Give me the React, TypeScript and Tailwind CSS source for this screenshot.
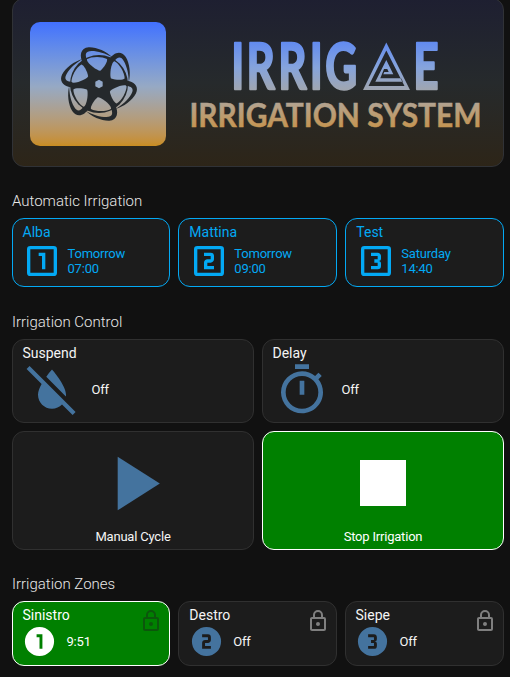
import type { ReactNode } from "react";

const digits: Record<number, string> = {
  1: "M14,17H12V9H10V7H14Z",
  2: "M15,11C15,12.11 14.1,13 13,13H11V15H15V17H9V13C9,11.89 9.9,11 11,11H13V9H9V7H13A2,2 0 0,1 15,9Z",
  3: "M15,15V13.5A1.5,1.5 0 0,0 13.5,12A1.5,1.5 0 0,0 15,10.5V9C15,7.89 14.1,7 13,7H9V9H13V11H11V13H13V15H9V17H13A2,2 0 0,0 15,15Z",
};
const boxOutline =
  "M19,19H5V5H19M19,3H5A2,2 0 0,0 3,5V19A2,2 0 0,0 5,21H19A2,2 0 0,0 21,19V5A2,2 0 0,0 19,3Z";
const circle = "M12,2A10,10 0 0,0 2,12A10,10 0 0,0 12,22A10,10 0 0,0 22,12A10,10 0 0,0 12,2Z";
const waterOff =
  "M20.84 22.73L16.29 18.18C15.2 19.3 13.69 20 12 20C8.69 20 6 17.31 6 14C6 12.67 6.67 11.03 7.55 9.44L1.11 3L2.39 1.73L22.11 21.46L20.84 22.73M18 14C18 10 12 3.25 12 3.25S10.84 4.55 9.55 6.35L17.95 14.75C18 14.5 18 14.24 18 14Z";
const timer =
  "M12,20A7,7 0 0,1 5,13A7,7 0 0,1 12,6A7,7 0 0,1 19,13A7,7 0 0,1 12,20M19.03,7.39L20.45,5.97C20,5.46 19.55,5 19.04,4.56L17.62,6C16.07,4.74 14.12,4 12,4A9,9 0 0,0 3,13A9,9 0 0,0 12,22C17,22 21,17.97 21,13C21,10.88 20.26,8.93 19.03,7.39M11,14H13V8H11M15,1H9V3H15V1Z";
const lock =
  "M12,17C10.89,17 10,16.1 10,15A2,2 0 0,1 12,13A2,2 0 0,1 14,15A2,2 0 0,1 12,17M18,20V10H6V20H18M18,8A2,2 0 0,1 20,10V20A2,2 0 0,1 18,22H6C4.89,22 4,21.1 4,20V10C4,8.89 4.89,8 6,8H7V6A5,5 0 0,1 12,1A5,5 0 0,1 17,6V8H18M12,3A3,3 0 0,0 9,6V8H15V6A3,3 0 0,0 12,3Z";

function Icon({ d, className }: { d: string; className: string }) {
  return (
    <svg viewBox="0 0 24 24" className={`shrink-0 ${className}`} fill="currentColor" fillRule="evenodd">
      <path d={d} />
    </svg>
  );
}

const sectors = [0, 60, 120, 180, 240, 300];

function Rotor() {
  return (
    <svg viewBox="-117 -117 234 234" className="mb-px ml-0.5 h-[78px] w-[78px] text-[#25292c]">
      <mask id="holes">
        <rect x="-117" y="-117" width="234" height="234" fill="white" />
        {sectors.map((a) => (
          <path
            key={a}
            transform={`rotate(${a})`}
            d="M-37,-74C-24,-83 8,-84 24,-75C27,-68 14,-48 4,-40C0,-37 -34,-58 -37,-74Z"
            fill="black"
          />
        ))}
        <path d="M0,-13L11,-6.5V6.5L0,13L-11,6.5V-6.5Z" fill="black" />
      </mask>
      <circle r="87" fill="currentColor" mask="url(#holes)" />
      {sectors.map((a) => (
        <path
          key={a}
          transform={`rotate(${a})`}
          d="M-48,-62C-60,-84 -56,-108 -31,-110C-8,-111 22,-98 40,-80C20,-92 -4,-99 -22,-99C-42,-99 -42,-88 -36,-73Z"
          fill="currentColor"
        />
      ))}
    </svg>
  );
}

function Banner() {
  return (
    <div className="-mt-[2px] flex h-[169px] shrink-0 items-start rounded-xl border border-[#303236] bg-linear-to-b from-[#1e1f31] via-[#262a2c] to-[#2d2518] pl-[17px] pt-[11px]">
      <div className="mt-3 flex h-[124px] w-[136px] shrink-0 items-center justify-center rounded-[10px] bg-linear-to-b from-[#4270ff] via-[#96a9c4] via-52% to-[#c98d20]">
        <Rotor />
      </div>
      <svg width="302" height="140" viewBox="185 10 302 140" className="ml-[19px] shrink-0">
        <defs>
          <linearGradient id="sky" gradientUnits="userSpaceOnUse" x1="0" y1="42" x2="0" y2="128">
            <stop offset="0" stopColor="#628bf0" />
            <stop offset="0.3" stopColor="#86a4dc" />
            <stop offset="0.56" stopColor="#a0a6b0" />
            <stop offset="0.76" stopColor="#b7a185" />
            <stop offset="1" stopColor="#c59450" />
          </linearGradient>
        </defs>
        <g fill="url(#sky)" fontFamily="Lato, sans-serif" fontWeight="700">
          <g stroke="url(#sky)" strokeWidth="2.4" strokeLinejoin="round" fontSize="63" transform="scale(0.7 1)">
            <text y="89.5" x="330.5 352 397.6 442.5 464.5">
              IRRIG
            </text>
            <text y="89.5" x="590.5">
              E
            </text>
          </g>
          <text
            y="127"
            fontSize="33"
            stroke="url(#sky)"
            strokeWidth="0.5"
            textLength="292"
            lengthAdjust="spacingAndGlyphs"
            x="189.5"
          >
            IRRIGATION SYSTEM
          </text>
          <path
            fillRule="evenodd"
            d="M386.3,42.5L410,90H363ZM386.3,50.5L368.5,86H404.5ZM386.3,60L393.3,74.3H383.3L384.3,72H388.7L387.3,69H384L380.3,78.3H401L403,81.7H375.3Z"
          />
        </g>
      </svg>
    </div>
  );
}

function Heading({ children, className }: { children: ReactNode; className: string }) {
  return <h2 className={`text-[15px] font-light leading-5 text-[#e8e8e8] ${className}`}>{children}</h2>;
}

function Schedule({ n, name, day, time }: { n: number; name: string; day: string; time: string }) {
  return (
    <div
      className={`h-[69px] rounded-xl border border-[#03a9f4] bg-[#1c1c1c] pt-1 text-[#03a9f4] ${
        n === 1 ? "pl-[9.5px]" : "pl-[10.3px]"
      }`}
    >
      <div className="text-[14px] leading-[18px]">{name}</div>
      <div className="-ml-[0.5px] flex items-center">
        <Icon d={boxOutline + digits[n]} className="h-10 w-10" />
        <div className="ml-[5.5px] text-[13px] leading-[15px] tracking-[-0.2px]">
          <div>{day}</div>
          <div>{time}</div>
        </div>
      </div>
    </div>
  );
}

function Control({ name, icon }: { name: string; icon: string }) {
  return (
    <div className="h-[84px] rounded-xl border border-[#303030] bg-[#1c1c1c] pl-[9.5px] pt-1 text-[#f4f4f4]">
      <div className="text-[14px] leading-[18px]">{name}</div>
      <div className="ml-[1.5px] flex items-center">
        <Icon d={icon} className="h-14 w-14 text-[#44739e]" />
        <div className="ml-[11.5px] text-[13px] tracking-[-0.2px]">Off</div>
      </div>
    </div>
  );
}

function Action({ name, icon, active }: { name: string; icon: string; active?: boolean }) {
  return (
    <div
      className={`flex h-[119px] flex-col items-center rounded-xl border pt-[5px] ${
        active ? "border-white bg-[#008000] text-white" : "border-[#303030] bg-[#1c1c1c] text-[#f4f4f4]"
      }`}
    >
      <Icon d={icon} className={active ? "h-[92px] w-[92px]" : "h-[92px] w-[92px] text-[#44739e]"} />
      <div className="text-[13px] leading-[15px] tracking-[-0.2px]">{name}</div>
    </div>
  );
}

function Zone({ n, name, state, active }: { n: number; name: string; state: string; active?: boolean }) {
  return (
    <div
      className={`flex h-[65px] justify-between rounded-xl border pr-1.5 pt-1 ${n === 2 ? "pl-[10.3px]" : "pl-[9.5px]"} ${
        active ? "border-white bg-[#008000] text-white" : "border-[#303030] bg-[#1c1c1c] text-[#f4f4f4]"
      }`}
    >
      <div>
        <div className="text-[14px] leading-[18px]">{name}</div>
        <div className="-ml-[0.5px] flex items-center">
          <Icon d={circle + digits[n]} className={active ? "h-[35px] w-[35px]" : "h-[35px] w-[35px] text-[#44739e]"} />
          <div className="ml-[9.5px] text-[13px] tracking-[-0.2px]">{state}</div>
        </div>
      </div>
      <Icon d={lock} className={active ? "mt-[3px] h-6 w-6 text-[#0c560c]" : "mt-[3px] h-6 w-6 text-[#7f7f7f]"} />
    </div>
  );
}

export default function App() {
  return (
    <main className="flex h-[677px] w-[510px] flex-col overflow-hidden bg-[#111111] pl-3 pr-1.5 font-[Roboto,sans-serif]">
      <Banner />
      <Heading className="mt-6">Automatic Irrigation</Heading>
      <div className="mt-[7px] grid grid-cols-[158px_159px_159px] gap-2">
        <Schedule n={1} name="Alba" day="Tomorrow" time="07:00" />
        <Schedule n={2} name="Mattina" day="Tomorrow" time="09:00" />
        <Schedule n={3} name="Test" day="Saturday" time="14:40" />
      </div>
      <Heading className="mt-[25px]">Irrigation Control</Heading>
      <div className="mt-[7px] grid grid-cols-2 gap-2">
        <Control name="Suspend" icon={waterOff} />
        <Control name="Delay" icon={timer} />
        <Action name="Manual Cycle" icon="M8,5.14V19.14L19,12.14L8,5.14Z" />
        <Action name="Stop Irrigation" icon="M18,18H6V6H18V18Z" active />
      </div>
      <Heading className="mt-6">Irrigation Zones</Heading>
      <div className="mt-[7px] grid grid-cols-[158px_159px_159px] gap-2">
        <Zone n={1} name="Sinistro" state="9:51" active />
        <Zone n={2} name="Destro" state="Off" />
        <Zone n={3} name="Siepe" state="Off" />
      </div>
    </main>
  );
}
